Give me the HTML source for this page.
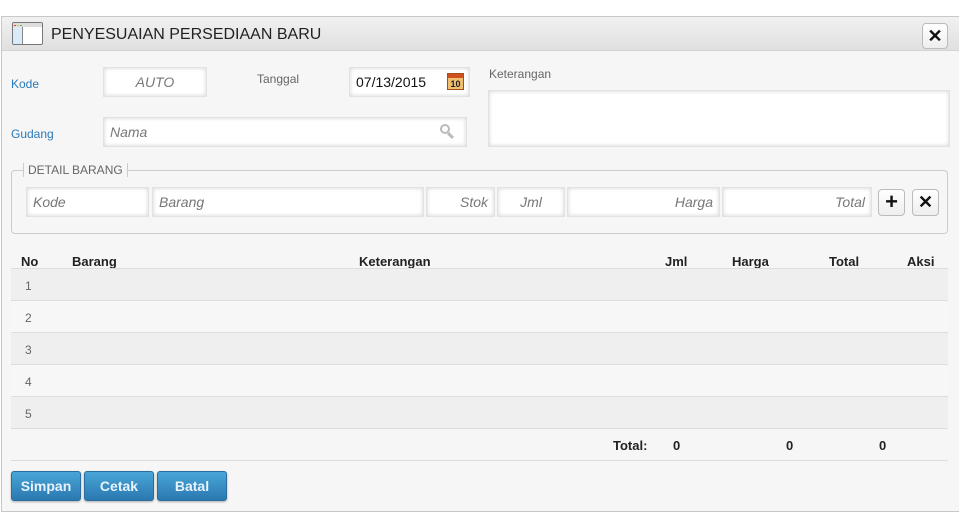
<!DOCTYPE html>
<html><head><style>
*{box-sizing:border-box;margin:0;padding:0}
body{width:959px;height:529px;background:#fff;font-family:"Liberation Sans",Arial,sans-serif;position:relative;overflow:hidden}
.dlg{position:absolute;left:1px;top:16px;width:962px;height:496px;border:1px solid #c8c8c8;background:#f6f6f6}
.hdr{position:absolute;left:0;top:0;right:0;height:34px;background:linear-gradient(#f1f1f1,#e0e0e0);border-bottom:1px solid #d4d4d4}
.a{position:absolute}
.inp{position:absolute;background:#fff;border:1px solid #e2e2e2;box-shadow:inset 0 0 4px rgba(0,0,0,.18);font-size:14px;color:#777;font-style:italic;line-height:28px;padding:0 6px}
.lbl{position:absolute;font-size:12px;color:#2a7ab8}
.gl{position:absolute;font-size:12px;color:#666}
.th{position:absolute;top:254px;font-size:13px;font-weight:bold;color:#222}
.row{position:absolute;left:11px;width:937px;height:32px;border-bottom:1px solid #ddd}
.row span{position:absolute;left:14px;top:10px;font-size:12px;color:#666}
.btn{position:absolute;top:471px;height:30px;background:linear-gradient(#49a6d6,#2a78b0);border:1px solid #2a6d9e;border-radius:3px;color:#e8f3ff;font-weight:bold;font-size:14px;text-align:center;line-height:28px;box-shadow:0 1px 2px rgba(0,0,0,.3)}
.ib{position:absolute;width:27px;height:27px;border:1px solid #bbb;border-radius:4px;background:linear-gradient(#fff,#eee);font-weight:bold;font-size:18px;text-align:center;line-height:25px;color:#111}
</style></head><body>
<div class="dlg">
<div class="hdr">
 <div class="a" style="left:10px;top:5px;width:31px;height:23px;border:1px solid #777;border-radius:2px;background:#fff;overflow:hidden">
  <div class="a" style="left:0;top:0;right:0;height:4px;background:#ddd"></div>
  <div class="a" style="left:1px;top:2px;width:2px;height:1px;background:#e33"></div>
  <div class="a" style="left:4px;top:2px;width:2px;height:1px;background:#ec3"></div>
  <div class="a" style="left:7px;top:2px;width:2px;height:1px;background:#5b5"></div>
  <div class="a" style="left:0;top:4px;width:10px;bottom:0;background:#d9eaf8;border-right:1px solid #888"></div>
 </div>
 <div class="a" style="left:49px;top:9px;font-size:16px;color:#222">PENYESUAIAN PERSEDIAAN BARU</div>
 <div class="ib" style="left:920px;top:6px;width:26px;height:26px">✕</div>
</div>
</div>
<div class="lbl" style="left:11px;top:77px">Kode</div>
<div class="inp" style="left:103px;top:67px;width:104px;height:30px;text-align:center">AUTO</div>
<div class="gl" style="left:257px;top:72px">Tanggal</div>
<div class="inp" style="left:349px;top:67px;width:121px;height:30px;font-style:normal;color:#111;font-size:14px">07/13/2015</div>
<div class="a" style="left:447px;top:73px;width:17px;height:17px;background:#f0c070;border:1px solid #a05018;font-size:9px;font-weight:bold;text-align:center;line-height:20px;color:#222"><div class="a" style="left:0;top:0;right:0;height:4px;background:#d05020"></div>10</div>
<div class="gl" style="left:489px;top:67px">Keterangan</div>
<div class="inp" style="left:488px;top:90px;width:462px;height:57px"></div>
<div class="lbl" style="left:11px;top:127px">Gudang</div>
<div class="inp" style="left:103px;top:117px;width:364px;height:30px">Nama</div>
<div class="a" style="left:440px;top:124px;width:10px;height:10px;border:2px solid #bbb;border-radius:50%"></div>
<div class="a" style="left:447px;top:134px;width:7px;height:3px;background:#bbb;transform:rotate(45deg)"></div>
<div class="a" style="left:11px;top:170px;width:937px;height:64px;border:1px solid #ccc;border-radius:4px"></div>
<div class="a" style="left:23px;top:163px;background:#f6f6f6;padding:0 4px;font-size:12px;color:#666;border-left:1px solid #ccc;border-right:1px solid #ccc">DETAIL BARANG</div>
<div class="inp" style="left:26px;top:187px;width:123px;height:30px">Kode</div>
<div class="inp" style="left:152px;top:187px;width:272px;height:30px">Barang</div>
<div class="inp" style="left:426px;top:187px;width:69px;height:30px;text-align:right">Stok</div>
<div class="inp" style="left:497px;top:187px;width:68px;height:30px;text-align:center">Jml</div>
<div class="inp" style="left:567px;top:187px;width:153px;height:30px;text-align:right">Harga</div>
<div class="inp" style="left:722px;top:187px;width:150px;height:30px;text-align:right">Total</div>
<div class="ib" style="left:878px;top:189px;font-size:22px;line-height:24px">+</div>
<div class="ib" style="left:912px;top:189px">✕</div>
<div class="th" style="left:21px">No</div>
<div class="th" style="left:72px">Barang</div>
<div class="th" style="left:359px">Keterangan</div>
<div class="th" style="left:665px">Jml</div>
<div class="th" style="left:732px">Harga</div>
<div class="th" style="left:829px">Total</div>
<div class="th" style="left:907px">Aksi</div>
<div class="a" style="left:11px;top:268px;width:937px;height:2px;background:#ddd"></div>
<div class="row" style="top:269px;background:#efefef"><span>1</span></div>
<div class="row" style="top:301px;background:#f7f7f7"><span>2</span></div>
<div class="row" style="top:333px;background:#efefef"><span>3</span></div>
<div class="row" style="top:365px;background:#f7f7f7"><span>4</span></div>
<div class="row" style="top:397px;background:#efefef"><span>5</span></div>
<div class="row" style="top:429px;background:#f6f6f6"></div>
<div class="th" style="left:613px;top:438px">Total:</div>
<div class="th" style="left:673px;top:438px">0</div>
<div class="th" style="left:786px;top:438px">0</div>
<div class="th" style="left:879px;top:438px">0</div>
<div class="btn" style="left:11px;width:70px">Simpan</div>
<div class="btn" style="left:84px;width:70px">Cetak</div>
<div class="btn" style="left:157px;width:70px">Batal</div>
</body></html>
